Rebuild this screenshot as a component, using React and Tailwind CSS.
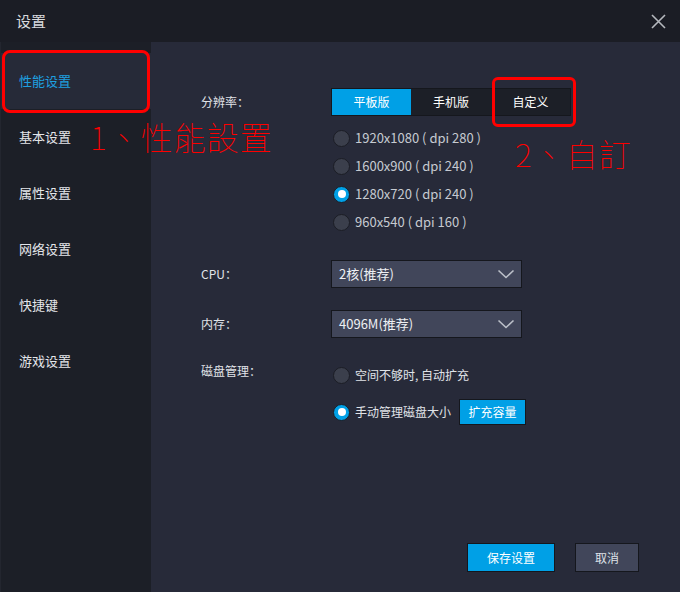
import React from 'react';

const menu = ['性能设置', '基本设置', '属性设置', '网络设置', '快捷键', '游戏设置'];
const resolutions = [
  { label: '1920x1080 ( dpi 280 )', checked: false },
  { label: '1600x900 ( dpi 240 )', checked: false },
  { label: '1280x720 ( dpi 240 )', checked: true },
  { label: '960x540 ( dpi 160 )', checked: false },
];

function Radio({ checked }) {
  return checked ? (
    <span className="w-[17px] h-[17px] rounded-full bg-[#00a0e6] border border-[#1b1d25] flex items-center justify-center shrink-0">
      <span className="w-[8px] h-[8px] rounded-full bg-white" />
    </span>
  ) : (
    <span className="w-[17px] h-[17px] rounded-full bg-[#3b3f4c] border border-[#1b1d25] shrink-0" />
  );
}

function Select({ value }) {
  return (
    <div className="w-[191px] h-[28px] bg-[#41465a] border border-[#15171d] flex items-center justify-between pl-[7px] pr-[6px] text-[13px] text-[#eef0f4]">
      <span>{value}</span>
      <svg width="18" height="10" viewBox="0 0 18 10" fill="none">
        <path d="M1.5 1.5 L9 8.5 L16.5 1.5" stroke="#bcc0c9" strokeWidth="1.6" />
      </svg>
    </div>
  );
}

export default function App() {
  return (
    <div
      className="w-[680px] h-[592px] flex flex-col bg-[#16181e] relative overflow-hidden"
      style={{ fontFamily: '"Noto Sans CJK SC", "Microsoft YaHei", sans-serif' }}
    >
      {/* Title bar */}
      <div className="h-[42px] flex items-center justify-between bg-[#1b1d25] pl-[16px] pr-[14px] shrink-0">
        <span className="text-[15px] text-[#d8dade]">设置</span>
        <svg width="15" height="15" viewBox="0 0 15 15" fill="none">
          <path d="M1 1 L14 14 M14 1 L1 14" stroke="#b5b8be" strokeWidth="1.6" />
        </svg>
      </div>

      <div className="flex flex-1 h-[549px] min-h-0">
        {/* Sidebar */}
        <div className="w-[151px] bg-[#1c1f27] pt-[11px] border-l border-[#23262f]">
          {menu.map((m, i) => (
            <div
              key={m}
              className={`h-[56px] flex items-center pl-[18px] text-[13px] ${
                i === 0 ? 'bg-[#262a38] text-[#1ea0e0]' : 'text-[#e4e6ea]'
              }`}
            >
              {m}
            </div>
          ))}
        </div>

        {/* Content */}
        <div className="flex-1 bg-[#272a39] flex flex-col pl-[50px] pt-[46px] pr-[41px] pb-[20px] text-[12px] text-[#e0e3e8]">
          <div className="flex items-center h-[28px]">
            <div className="w-[130px]">分辨率：</div>
            <div className="flex border border-[#15171d] text-[12px] text-white">
              <div className="w-[79px] h-[26px] flex items-center justify-center bg-[#00a0e6]">平板版</div>
              <div className="w-[80px] h-[26px] flex items-center justify-center bg-[#1c1f27]">手机版</div>
              <div className="w-[79px] h-[26px] flex items-center justify-center bg-[#1c1f27]">自定义</div>
            </div>
          </div>

          <div className="flex flex-col mt-[8px] pl-[130px]">
            {resolutions.map((r) => (
              <div key={r.label} className="h-[28px] flex items-center gap-[5px] pl-[2px] text-[13px] text-[#c6cad1]">
                <Radio checked={r.checked} />
                <span>{r.label}</span>
              </div>
            ))}
          </div>

          <div className="flex items-center mt-[24px]">
            <div className="w-[130px]">CPU：</div>
            <Select value="2核(推荐)" />
          </div>

          <div className="flex items-center mt-[22px]">
            <div className="w-[130px]">内存：</div>
            <Select value="4096M(推荐)" />
          </div>

          <div className="flex mt-[23px]">
            <div className="w-[130px] h-[20px] leading-[20px]">磁盘管理：</div>
            <div className="flex flex-col gap-[10px]">
              <div className="h-[28px] flex items-center gap-[5px] pl-[2px] text-[12px] text-[#e0e3e8]">
                <Radio checked={false} />
                <span>空间不够时, 自动扩充</span>
              </div>
              <div className="h-[26px] flex items-center gap-[5px] pl-[2px] text-[12px] text-[#e0e3e8]">
                <Radio checked={true} />
                <span>手动管理磁盘大小</span>
                <div className="ml-[3px] w-[67px] h-[26px] flex items-center justify-center bg-[#00a0e6] border border-[#15171d] text-[12px] text-white">
                  扩充容量
                </div>
              </div>
            </div>
          </div>

          <div className="mt-auto flex justify-end gap-[20px]">
            <div className="w-[88px] h-[29px] flex items-center justify-center bg-[#00a0e6] border border-[#15171d] text-[12px] text-white">
              保存设置
            </div>
            <div className="w-[64px] h-[29px] flex items-center justify-center bg-[#41465a] border border-[#15171d] text-[12px] text-[#dfe2e8]">
              取消
            </div>
          </div>
        </div>
      </div>

      {/* Red annotations */}
      <div className="absolute left-[2px] top-[50px] w-[148px] h-[63px] border-[3px] border-[#ff0000] rounded-[8px]" />
      <div className="absolute left-[492px] top-[77px] w-[84px] h-[50px] border-[3px] border-[#ff0000] rounded-[6px]" />
      <div
        className="absolute left-[90px] top-[116px] text-[32px] leading-[40px] tracking-[1px] text-[#ff0000] font-thin whitespace-nowrap"
        style={{ fontFamily: '"Noto Sans CJK TC", sans-serif' }}
      >
        1、性能設置
      </div>
      <div
        className="absolute left-[515px] top-[133px] text-[32px] leading-[40px] tracking-[1px] text-[#ff0000] font-thin whitespace-nowrap"
        style={{ fontFamily: '"Noto Sans CJK TC", sans-serif' }}
      >
        2、自訂
      </div>
    </div>
  );
}
